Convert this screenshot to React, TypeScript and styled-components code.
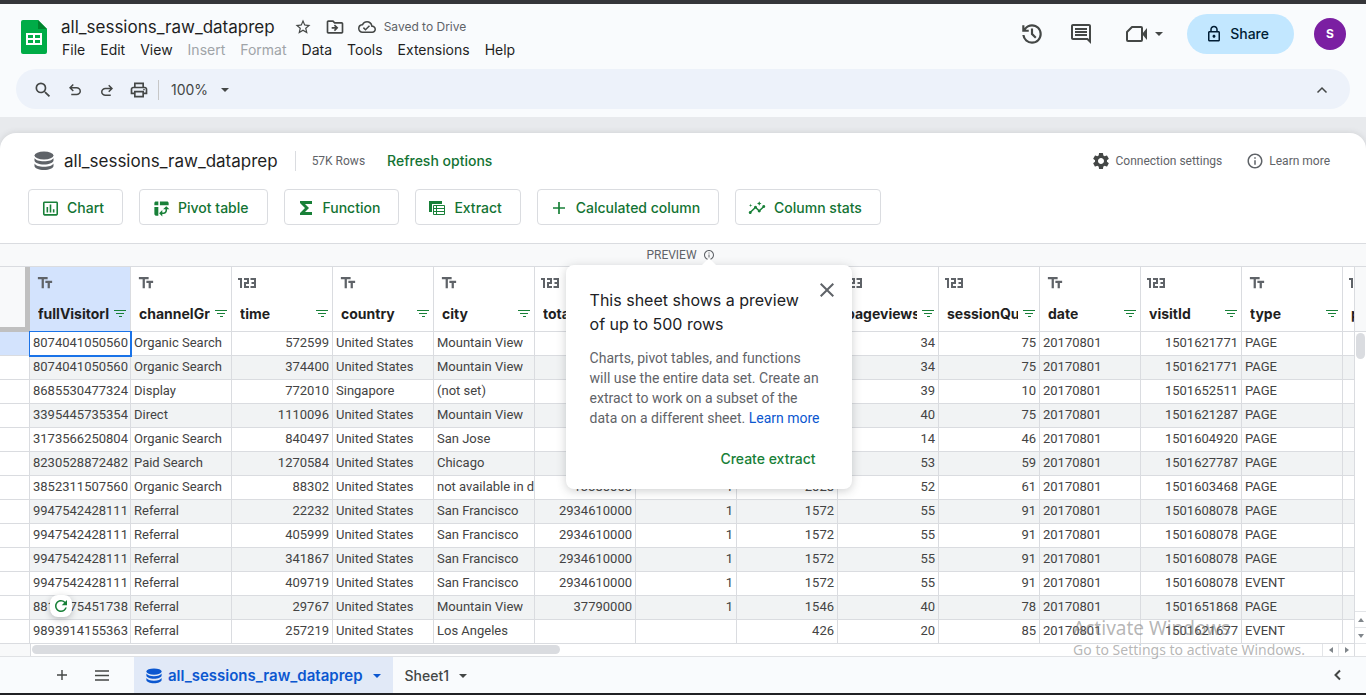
import React from 'react';
import styled, { createGlobalStyle, css } from 'styled-components';
import {
  MdStarBorder,
  MdOutlineDriveFileMove,
  MdOutlineCloudDone,
  MdOutlineComment,
  MdOutlineLock,
  MdSearch,
  MdOutlinePrint,
  MdSettings,
  MdInfoOutline,
  MdInsertChartOutlined,
  MdPivotTableChart,
  MdInsights,
  MdTextFields,
  MdClose,
  MdRefresh,
} from 'react-icons/md';

const color = {
  text: '#1f1f1f',
  body: '#444746',
  muted: '#5f6368',
  disabled: '#a0a4a8',
  green: '#137333',
  brightGreen: '#188038',
  blue: '#0b57d0',
  line: '#dadce0',
  selected: '#d3e3fd',
  band: '#f1f3f4',
  surface: '#f9fbfd',
};

const display = "Inter, 'Open Sans', sans-serif";
const plain = "Roboto, 'Liberation Sans', sans-serif";

const GlobalStyle = createGlobalStyle`
  *, *::before, *::after { box-sizing: border-box; }
  body { margin: 0; font-family: ${plain}; color: ${color.text}; background: #e8eaed; }
  button, select { font: inherit; color: inherit; }
  button { margin: 0; padding: 0; border: 0; background: none; cursor: pointer; }
  h1, h2, h3, p { margin: 0; font-weight: 400; }
  svg { display: block; flex: none; }
`;

const Page = styled.div`
  position: relative;
  display: flex;
  flex-direction: column;
  min-height: 100vh;
  overflow: hidden;
  border-top: 4px solid #35363a;
  border-bottom: 2px solid #202124;
`;

/* ---- document header ---- */

const DocHeader = styled.header`
  padding-bottom: 8px;
  background: ${color.surface};
`;

const HeaderRow = styled.div`
  display: flex;
  align-items: flex-start;
  padding: 10px 20px 7px 21px;
`;

const LogoLink = styled.a`
  margin: 6px 14px 0 0;
`;

const TitleRow = styled.div`
  display: flex;
  align-items: center;
  gap: 12px;
  height: 24px;
  padding-top: 1px;
`;

const DocTitle = styled.h1`
  margin-right: 6px;
  font: 400 17px/24px ${display};
`;

const IconButton = styled.button`
  display: grid;
  place-items: center;
  width: 20px;
  height: 20px;
  color: ${color.body};
`;

const SourceButton = styled(IconButton)`
  color: ${color.muted};
`;

const SaveStatus = styled.span`
  margin-left: -5px;
  padding-top: 1px;
  font: 400 12px/16px ${display};
  color: ${color.muted};
`;

const MenuBar = styled.nav`
  display: flex;
  gap: 15px;
  height: 24px;
  padding-left: 1px;
`;

const MenuItem = styled.button`
  font: 400 14px/24px ${display};
  &:disabled {
    color: ${color.disabled};
    cursor: default;
  }
`;

const HeaderActions = styled.div`
  display: flex;
  align-items: center;
  height: 40px;
  margin-left: auto;
  color: ${color.body};
`;

const ActionButton = styled.button<{ $gap: number }>`
  display: flex;
  align-items: center;
  gap: 7px;
  height: 24px;
  margin-right: ${(p) => p.$gap}px;
`;

const ShareButton = styled.button`
  display: flex;
  align-items: center;
  gap: 7px;
  height: 40px;
  margin-right: 20px;
  padding: 0 25px 0 18px;
  border-radius: 20px;
  background: #c2e7ff;
  color: #001d35;
  font: 500 14px/20px ${display};
`;

const Avatar = styled.button`
  width: 32px;
  height: 32px;
  border-radius: 50%;
  background: #7b1fa2;
  color: #fff;
  font: 700 12px/32px ${display};
`;

const Toolbar = styled.div`
  display: flex;
  align-items: center;
  gap: 12px;
  height: 40px;
  margin: 0 16px;
  padding: 2px 18px 0 17px;
  border-radius: 20px;
  background: #edf2fa;
`;

const ToolbarDivider = styled.span`
  width: 1px;
  height: 20px;
  margin-left: -3px;
  background: #c7c7c7;
`;

const ZoomBox = styled.label`
  display: flex;
  align-items: center;
  gap: 12px;
  color: ${color.body};
`;

const ZoomSelect = styled.select`
  appearance: none;
  width: 38px;
  padding: 0;
  border: 0;
  background: none;
  font: 400 14px/20px ${display};
`;

const Spacer = styled.span`
  flex: 1;
`;

/* ---- connected sheet card ---- */

const Card = styled.main`
  display: flex;
  flex: 1;
  flex-direction: column;
  margin-top: 16px;
  border-radius: 16px 16px 0 0;
  background: #fff;
  box-shadow: 0 0 6px rgba(60, 64, 67, 0.16);
`;

const SourceRow = styled.div`
  display: flex;
  align-items: center;
  height: 56px;
  padding: 0 36px 0 34px;
`;

const SourceTitle = styled.h2`
  margin: 0 17px 0 10px;
  font: 400 17px/24px ${display};
`;

const RowCount = styled.span`
  padding: 0 22px 0 16px;
  border-left: 1px solid ${color.line};
  font: 400 12px/20px ${plain};
  color: ${color.muted};
`;

const TextButton = styled.button`
  font: 500 14px/20px ${display};
  color: ${color.green};
`;

const SideLinks = styled.div`
  display: flex;
  gap: 24px;
  margin-left: auto;
`;

const SideLink = styled.a`
  display: flex;
  align-items: center;
  gap: 5px;
  font: 400 12px/20px ${plain};
  color: ${color.muted};
  text-decoration: none;
`;

const ToolRow = styled.div`
  display: flex;
  gap: 16px;
  padding: 0 28px 18px;
`;

const ToolButton = styled.button`
  display: flex;
  align-items: center;
  gap: 7px;
  height: 36px;
  padding: 2px 18px 0 11px;
  border: 1px solid ${color.line};
  border-radius: 4px;
  font: 500 14px/20px ${display};
  color: ${color.green};
`;

const ToolIcon = styled.span`
  display: grid;
  place-items: center;
  width: 20px;
  color: ${color.brightGreen};
`;

const PreviewBar = styled.div`
  display: flex;
  align-items: center;
  justify-content: center;
  gap: 6px;
  height: 24px;
  padding-right: 5px;
  border: solid ${color.line};
  border-width: 1px 0;
  background: #f8f9fa;
  font: 400 12px/16px ${plain};
  color: ${color.muted};
`;

const PreviewInfo = styled.span`
  position: relative;
`;

/* ---- preview popover ---- */

const Popover = styled.section`
  position: absolute;
  z-index: 2;
  top: 16px;
  left: 50%;
  width: 286px;
  margin-left: -143px;
  padding: 23px 24px 20px;
  border-radius: 8px;
  background: #fff;
  box-shadow: 0 2px 10px rgba(60, 64, 67, 0.25);
  &::before {
    content: '';
    position: absolute;
    top: -7px;
    left: 50%;
    margin-left: -8px;
    border: solid transparent;
    border-width: 0 8px 8px;
    border-bottom-color: #fff;
  }
`;

const PopoverTitle = styled.h3`
  font: 400 16px/24px ${display};
  color: #202124;
`;

const PopoverText = styled.p`
  margin-top: 12px;
  padding-right: 5px;
  font: 400 14px/20px ${plain};
  color: ${color.muted};
`;

const PopoverLink = styled.a`
  color: ${color.blue};
  text-decoration: none;
`;

const PopoverActions = styled.div`
  display: flex;
  justify-content: flex-end;
  margin-top: 21px;
  padding-right: 12px;
`;

const PopoverAction = styled(TextButton)`
  color: ${color.brightGreen};
`;

const CloseButton = styled.button`
  position: absolute;
  top: 13px;
  right: 13px;
  color: ${color.muted};
`;

/* ---- grid ---- */

const GridFrame = styled.div`
  position: relative;
  display: flex;
  flex: 1;
`;

const GridBody = styled.div`
  flex: 1;
  min-width: 0;
  overflow: hidden;
`;

const Table = styled.table`
  table-layout: fixed;
  width: 1444px;
  border-collapse: separate;
  border-spacing: 0;
`;

const GutterCol = styled.col`
  width: 30px;
`;

const DataCol = styled.col`
  width: 101px;
`;

const cellLines = css`
  border: solid ${color.line};
  border-width: 0 1px 1px 0;
`;

const Corner = styled.td`
  padding: 0;
  border: solid #c0c0c0;
  border-width: 0 5px 5px 0;
  background: #f8f9fa;
`;

const HeadCell = styled.th<{ $selected?: boolean }>`
  ${cellLines}
  height: 65px;
  padding: 6px 0 0;
  vertical-align: top;
  background: ${(p) => (p.$selected ? color.selected : '#fff')};
`;

const TypeIcon = styled.span`
  display: flex;
  align-items: center;
  height: 20px;
  padding-left: 6px;
  color: ${color.muted};
`;

const HeadLabel = styled.div`
  display: flex;
  align-items: center;
  justify-content: space-between;
  gap: 5px;
  margin-top: 11px;
  padding: 0 4px 0 8px;
  color: ${color.brightGreen};
`;

const HeadName = styled.span`
  overflow: hidden;
  white-space: nowrap;
  font: 700 14px/20px ${display};
  color: ${color.text};
`;

const BodyRow = styled.tr<{ $banded: boolean }>`
  background: ${(p) => (p.$banded ? color.band : '#fff')};
`;

const RowHead = styled.th<{ $selected: boolean }>`
  ${cellLines}
  height: 24px;
  padding: 0;
  background: ${(p) => (p.$selected ? color.selected : '#fff')};
`;

const Cell = styled.td<{ $numeric: boolean; $selected: boolean }>`
  ${cellLines}
  height: 24px;
  padding: 0 ${(p) => (p.$numeric ? 3 : 0)}px 2px 3px;
  overflow: hidden;
  white-space: nowrap;
  text-align: ${(p) => (p.$numeric ? 'right' : 'left')};
  font: 400 13px/20px ${plain};
  color: #434343;
  ${(p) =>
    p.$selected &&
    css`
      outline: 1px solid #1a73e8;
      border-color: #1a73e8;
    `}
`;

const scrollPart = css`
  display: grid;
  place-items: center;
  border: 0 solid #e3e5e8;
  color: #80868b;
`;

const HScroll = styled.div`
  display: flex;
  align-items: center;
  height: 12px;
`;

const HScrollGutter = styled.span`
  width: 31px;
  height: 12px;
  margin-right: 1px;
  border-right: 1px solid ${color.line};
  background: #f8f9fa;
`;

const HThumb = styled.span`
  width: 39%;
  height: 9px;
  margin-bottom: 2px;
  border-radius: 5px;
  background: ${color.line};
`;

const HArrow = styled.button`
  ${scrollPart}
  width: 16px;
  height: 12px;
  border-left-width: 1px;
`;

const VScroll = styled.div`
  display: flex;
  flex-direction: column;
  width: 12px;
  border-left: 1px solid ${color.line};
`;

const VScrollHead = styled.span`
  height: 65px;
  border-bottom: 1px solid ${color.line};
  background: #f8f9fa;
`;

const VThumb = styled.span`
  height: 26px;
  margin: 1px 1px auto;
  border-radius: 5px;
  background: ${color.line};
`;

const VArrow = styled.button`
  ${scrollPart}
  height: 16px;
  border-top-width: 1px;
`;

const VScrollFoot = styled.span`
  height: 13px;
  border-top: 1px solid #e3e5e8;
`;

const RefreshButton = styled.button`
  position: absolute;
  left: 50px;
  bottom: 39px;
  display: grid;
  place-items: center;
  width: 22px;
  height: 22px;
  border-radius: 8px;
  background: #fff;
  box-shadow: 0 2px 6px rgba(60, 64, 67, 0.3);
  color: ${color.brightGreen};
`;

/* ---- sheet tabs ---- */

const TabBar = styled.footer`
  display: flex;
  align-items: center;
  height: 37px;
  padding: 0 18px 0 52px;
  border-top: 1px solid #e0e2e5;
  background: ${color.surface};
  color: ${color.body};
`;

const TabTool = styled(IconButton)`
  margin-right: 20px;
`;

const SheetTab = styled.button<{ $active?: boolean }>`
  display: flex;
  align-items: center;
  height: 36px;
  padding: 2px 12px 0;
  font: 500 14px/20px ${display};
  color: ${color.body};
  ${(p) =>
    p.$active &&
    css`
      margin-left: 2px;
      font-weight: 600;
      font-size: 15px;
      color: ${color.blue};
      background: #e1e9f7;
    `}
`;

const TabName = styled.span`
  margin-right: 10px;
  svg + & {
    margin-left: 6px;
  }
`;

const Watermark = styled.aside`
  position: absolute;
  right: 61px;
  bottom: 33px;
  font-family: 'Noto Sans', 'Open Sans', sans-serif;
  color: rgba(120, 120, 120, 0.55);
  pointer-events: none;
`;

const WatermarkTitle = styled.p`
  font-size: 19px;
  line-height: 24px;
`;

const WatermarkText = styled.p`
  font-size: 14px;
  line-height: 20px;
`;

/* ---- drawings ---- */

const SheetsLogo = () => (
  <svg width="26" height="34" viewBox="0 0 26 34">
    <path d="M2 0h15l9 9v23a2 2 0 0 1-2 2H2a2 2 0 0 1-2-2V2a2 2 0 0 1 2-2z" fill="#00ac47" />
    <path d="M17 0l9 9h-9z" fill="#00832d" />
    <path d="M5 13h16v12H5zM7 15v3h5v-3zM14 15v3h5v-3zM7 20v3h5v-3zM14 20v3h5v-3z" fill="#fff" fillRule="evenodd" />
  </svg>
);

const HistoryIcon = () => (
  <svg width="26" height="26" viewBox="0 -960 960 960" fill="currentColor">
    <path d="M480-120q-138 0-240.5-91.5T122-440h82q14 104 92.5 172T480-200q117 0 198.5-81.5T760-480q0-117-81.5-198.5T480-760q-69 0-129 32t-101 88h110v80H120v-240h80v94q51-64 124.5-99T480-840q75 0 140.5 28.5t114 77q48.5 48.5 77 114T840-480q0 75-28.5 140.5t-77 114q-48.5 48.5-114 77T480-120Zm112-192L440-464v-216h80v184l128 128-56 56Z" />
  </svg>
);

const VideoIcon = () => (
  <svg width="22" height="18" viewBox="0 0 22 18">
    <path d="M6 2h9a1 1 0 0 1 1 1v12a1 1 0 0 1-1 1H2a1 1 0 0 1-1-1V7z" fill="none" stroke="currentColor" strokeWidth="2" strokeLinejoin="round" />
    <path d="M16 9l5-6v12z" fill="currentColor" />
  </svg>
);

const UndoIcon = () => (
  <svg width="18" height="18" viewBox="0 -960 960 960" fill="currentColor">
    <path d="M280-200v-80h284q63 0 109.5-40T720-420q0-60-46.5-100T564-560H312l104 104-56 56-200-200 200-200 56 56-104 104h252q97 0 166.5 63T800-420q0 94-69.5 157T564-200H280Z" />
  </svg>
);

const RedoIcon = () => (
  <svg width="18" height="18" viewBox="0 -960 960 960" fill="currentColor">
    <path d="M396-160q-97 0-166.5-63T160-380q0-94 69.5-157T396-600h252L544-704l56-56 200 200-200 200-56-56 104-104H396q-63 0-109.5 40T240-380q0 60 46.5 100T396-240h284v80H396Z" />
  </svg>
);

const Caret = () => (
  <svg width="8" height="4" viewBox="0 0 8 4" fill="currentColor">
    <path d="M0 0h8L4 4z" />
  </svg>
);

const Chevron = ({ d, weight = 2 }: { d: string; weight?: number }) => (
  <svg width="12" height="12" viewBox="0 0 12 12" fill="none" stroke="currentColor" strokeWidth={weight}>
    <path d={d} />
  </svg>
);

const DatabaseIcon = ({ size }: { size: number }) => (
  <svg width={size} height={size} viewBox="0 0 20 20" fill="currentColor">
    <ellipse cx="10" cy="4.5" rx="9.5" ry="4" />
    <path d="M.5 7v2.500c0 2.200 4.200 4 9.500 4s9.500-1.800 9.500-4V7C18.500 9 14.800 10.300 10 10.300S1.500 9 .5 7z" />
    <path d="M.5 12.500V15c0 2.200 4.200 4 9.500 4s9.500-1.800 9.500-4v-2.500c-1 2-4.700 3.300-9.500 3.300S1.500 14.500.5 12.500z" />
  </svg>
);

const SigmaIcon = () => (
  <svg width="12" height="14" viewBox="0 0 12 14" fill="currentColor">
    <path d="M0 0h12v3H5l4 4-4 4h7v3H0v-2L5 7 0 2z" />
  </svg>
);

const ExtractIcon = () => (
  <svg width="16" height="14" viewBox="0 0 16 14" fill="none" stroke="currentColor">
    <path d="M0 0h13v3H3v8H0z" fill="currentColor" stroke="none" />
    <path d="M4.5 4.5h11v9h-11zM4.5 7.5h11M4.5 10.5h11M7.5 4.5v9" />
  </svg>
);

const PlusIcon = ({ size }: { size: number }) => (
  <svg width={size} height={size} viewBox="0 0 12 12" fill="none" stroke="currentColor" strokeWidth="1.7">
    <path d="M6 0v12M0 6h12" />
  </svg>
);

const MenuLinesIcon = () => (
  <svg width="14" height="11" viewBox="0 0 14 11" fill="none" stroke="currentColor" strokeWidth="1.5">
    <path d="M0 1h14M0 5.5h14M0 10h14" />
  </svg>
);

const NumberTypeIcon = () => (
  <svg width="18" height="10" viewBox="0 0 18 10" fill="none" stroke="currentColor" strokeWidth="2">
    <path d="M0 1h3v9M6 1h4v4H7v4h4M12.5 1H17v8h-4.5M13.5 5H17" />
  </svg>
);

const FilterIcon = () => (
  <svg width="12" height="8" viewBox="0 0 12 8" fill="currentColor">
    <path d="M0 0h12v1H0zM2 3h8v1H2zM5 6h3v1H5z" />
  </svg>
);

const ArrowIcon = ({ d }: { d: string }) => (
  <svg width="6" height="6" viewBox="0 0 6 6" fill="currentColor">
    <path d={d} />
  </svg>
);

/* ---- data ---- */

const menus = ['File', 'Edit', 'View', 'Insert', 'Format', 'Data', 'Tools', 'Extensions', 'Help'];
const disabledMenus = ['Insert', 'Format'];

const tools: [string, React.ReactNode][] = [
  ['Chart', <MdInsertChartOutlined size={19} />],
  ['Pivot table', <MdPivotTableChart size={19} />],
  ['Function', <SigmaIcon />],
  ['Extract', <ExtractIcon />],
  ['Calculated column', <PlusIcon size={12} />],
  ['Column stats', <MdInsights size={18} />],
];

const columns: { name: string; numeric: boolean }[] = [
  { name: 'fullVisitorId', numeric: false },
  { name: 'channelGrouping', numeric: false },
  { name: 'time', numeric: true },
  { name: 'country', numeric: false },
  { name: 'city', numeric: false },
  { name: 'totalTransactionRevenue', numeric: true },
  { name: 'transactions', numeric: true },
  { name: 'timeOnSite', numeric: true },
  { name: 'pageviews', numeric: true },
  { name: 'sessionQualityDim', numeric: true },
  { name: 'date', numeric: false },
  { name: 'visitId', numeric: true },
  { name: 'type', numeric: false },
  { name: 'productRefundAmount', numeric: true },
];

const us = 'United States';
const day = '20170801';
const rows: string[][] = [
  ['8074041050560', 'Organic Search', '572599', us, 'Mountain View', '', '', '', '34', '75', day, '1501621771', 'PAGE', ''],
  ['8074041050560', 'Organic Search', '374400', us, 'Mountain View', '', '', '', '34', '75', day, '1501621771', 'PAGE', ''],
  ['8685530477324', 'Display', '772010', 'Singapore', '(not set)', '', '', '', '39', '10', day, '1501652511', 'PAGE', ''],
  ['3395445735354', 'Direct', '1110096', us, 'Mountain View', '', '', '', '40', '75', day, '1501621287', 'PAGE', ''],
  ['3173566250804', 'Organic Search', '840497', us, 'San Jose', '', '', '', '14', '46', day, '1501604920', 'PAGE', ''],
  ['8230528872482', 'Paid Search', '1270584', us, 'Chicago', '', '', '', '53', '59', day, '1501627787', 'PAGE', ''],
  ['3852311507560', 'Organic Search', '88302', us, 'not available in demo dataset', '13380000', '1', '2028', '52', '61', day, '1501603468', 'PAGE', ''],
  ['9947542428111', 'Referral', '22232', us, 'San Francisco', '2934610000', '1', '1572', '55', '91', day, '1501608078', 'PAGE', ''],
  ['9947542428111', 'Referral', '405999', us, 'San Francisco', '2934610000', '1', '1572', '55', '91', day, '1501608078', 'PAGE', ''],
  ['9947542428111', 'Referral', '341867', us, 'San Francisco', '2934610000', '1', '1572', '55', '91', day, '1501608078', 'PAGE', ''],
  ['9947542428111', 'Referral', '409719', us, 'San Francisco', '2934610000', '1', '1572', '55', '91', day, '1501608078', 'EVENT', ''],
  ['8812075451738', 'Referral', '29767', us, 'Mountain View', '37790000', '1', '1546', '40', '78', day, '1501651868', 'PAGE', ''],
  ['9893914155363', 'Referral', '257219', us, 'Los Angeles', '', '', '426', '20', '85', day, '1501621677', 'EVENT', ''],
];

const PreviewPopover = () => (
  <Popover role="dialog" aria-labelledby="preview-title">
    <PopoverTitle id="preview-title">
      This sheet shows a preview
      <br />
      of up to 500 rows
    </PopoverTitle>
    <PopoverText>
      Charts, pivot tables, and functions will use the entire data set. Create an extract to work on a subset of the
      data on a different sheet. <PopoverLink href="#learn">Learn&nbsp;more</PopoverLink>
    </PopoverText>
    <PopoverActions>
      <PopoverAction>Create extract</PopoverAction>
    </PopoverActions>
    <CloseButton aria-label="Close">
      <MdClose size={24} />
    </CloseButton>
  </Popover>
);

const DataGrid = () => (
  <Table>
    <colgroup>
      <GutterCol />
      {columns.map((c) => (
        <DataCol key={c.name} />
      ))}
    </colgroup>
    <thead>
      <tr>
        <Corner />
        {columns.map((c, i) => (
          <HeadCell key={c.name} $selected={i === 0} scope="col">
            <TypeIcon>{c.numeric ? <NumberTypeIcon /> : <MdTextFields size={18} />}</TypeIcon>
            <HeadLabel>
              <HeadName>{c.name}</HeadName>
              <FilterIcon />
            </HeadLabel>
          </HeadCell>
        ))}
      </tr>
    </thead>
    <tbody>
      {rows.map((row, r) => (
        <BodyRow key={r} $banded={r % 2 === 1}>
          <RowHead $selected={r === 0} scope="row" />
          {row.map((value, c) => (
            <Cell key={c} $numeric={columns[c].numeric} $selected={r === 0 && c === 0}>
              {value}
            </Cell>
          ))}
        </BodyRow>
      ))}
    </tbody>
  </Table>
);

export default function App() {
  return (
    <Page>
      <GlobalStyle />
      <DocHeader>
        <HeaderRow>
          <LogoLink href="#home" aria-label="Sheets home">
            <SheetsLogo />
          </LogoLink>
          <div>
            <TitleRow>
              <DocTitle>all_sessions_raw_dataprep</DocTitle>
              <IconButton aria-label="Star">
                <MdStarBorder size={18} />
              </IconButton>
              <IconButton aria-label="Move">
                <MdOutlineDriveFileMove size={20} />
              </IconButton>
              <IconButton aria-label="Document status">
                <MdOutlineCloudDone size={18} />
              </IconButton>
              <SaveStatus>Saved to Drive</SaveStatus>
            </TitleRow>
            <MenuBar>
              {menus.map((m) => (
                <MenuItem key={m} disabled={disabledMenus.includes(m)}>
                  {m}
                </MenuItem>
              ))}
            </MenuBar>
          </div>
          <HeaderActions>
            <ActionButton $gap={24} aria-label="Version history">
              <HistoryIcon />
            </ActionButton>
            <ActionButton $gap={33} aria-label="Comments">
              <MdOutlineComment size={24} />
            </ActionButton>
            <ActionButton $gap={24} aria-label="Join a call">
              <VideoIcon />
              <Caret />
            </ActionButton>
            <ShareButton>
              <MdOutlineLock size={18} />
              Share
            </ShareButton>
            <Avatar aria-label="Account">S</Avatar>
          </HeaderActions>
        </HeaderRow>
        <Toolbar role="toolbar" aria-label="Main">
          <IconButton aria-label="Search the menus">
            <MdSearch size={20} />
          </IconButton>
          <IconButton aria-label="Undo">
            <UndoIcon />
          </IconButton>
          <IconButton aria-label="Redo">
            <RedoIcon />
          </IconButton>
          <IconButton aria-label="Print">
            <MdOutlinePrint size={20} />
          </IconButton>
          <ToolbarDivider />
          <ZoomBox>
            <ZoomSelect aria-label="Zoom" defaultValue="100%">
              <option>100%</option>
            </ZoomSelect>
            <Caret />
          </ZoomBox>
          <Spacer />
          <IconButton aria-label="Hide the menus">
            <Chevron d="M1.5 8.5 6 4l4.5 4.5" weight={1.5} />
          </IconButton>
        </Toolbar>
      </DocHeader>

      <Card>
        <SourceRow>
          <SourceButton aria-label="Data source">
            <DatabaseIcon size={20} />
          </SourceButton>
          <SourceTitle>all_sessions_raw_dataprep</SourceTitle>
          <RowCount>57K Rows</RowCount>
          <TextButton>Refresh options</TextButton>
          <SideLinks>
            <SideLink href="#settings">
              <MdSettings size={20} color={color.body} />
              Connection settings
            </SideLink>
            <SideLink href="#help">
              <MdInfoOutline size={18} />
              Learn more
            </SideLink>
          </SideLinks>
        </SourceRow>
        <ToolRow>
          {tools.map(([label, icon]) => (
            <ToolButton key={label}>
              <ToolIcon>{icon}</ToolIcon>
              {label}
            </ToolButton>
          ))}
        </ToolRow>
        <PreviewBar>
          PREVIEW
          <PreviewInfo>
            <MdInfoOutline size={12} />
            <PreviewPopover />
          </PreviewInfo>
        </PreviewBar>
        <GridFrame>
          <GridBody>
            <DataGrid />
            <HScroll>
              <HScrollGutter />
              <HThumb />
              <Spacer />
              <HArrow aria-label="Scroll left">
                <ArrowIcon d="M5 0v6L1 3z" />
              </HArrow>
              <HArrow aria-label="Scroll right">
                <ArrowIcon d="M1 0v6l4-3z" />
              </HArrow>
            </HScroll>
          </GridBody>
          <VScroll>
            <VScrollHead />
            <VThumb />
            <VArrow aria-label="Scroll up">
              <ArrowIcon d="M0 5h6L3 1z" />
            </VArrow>
            <VArrow aria-label="Scroll down">
              <ArrowIcon d="M0 1h6L3 5z" />
            </VArrow>
            <VScrollFoot />
          </VScroll>
          <RefreshButton aria-label="Refresh data">
            <MdRefresh size={18} />
          </RefreshButton>
        </GridFrame>
      </Card>

      <TabBar>
        <TabTool aria-label="Add sheet">
          <PlusIcon size={10} />
        </TabTool>
        <TabTool aria-label="All sheets">
          <MenuLinesIcon />
        </TabTool>
        <SheetTab $active>
          <DatabaseIcon size={16} />
          <TabName>all_sessions_raw_dataprep</TabName>
          <Caret />
        </SheetTab>
        <SheetTab>
          <TabName>Sheet1</TabName>
          <Caret />
        </SheetTab>
        <Spacer />
        <IconButton aria-label="Show side panel">
          <Chevron d="M8 1.5 3.5 6 8 10.5" />
        </IconButton>
      </TabBar>

      <Watermark>
        <WatermarkTitle>Activate Windows</WatermarkTitle>
        <WatermarkText>Go to Settings to activate Windows.</WatermarkText>
      </Watermark>
    </Page>
  );
}
